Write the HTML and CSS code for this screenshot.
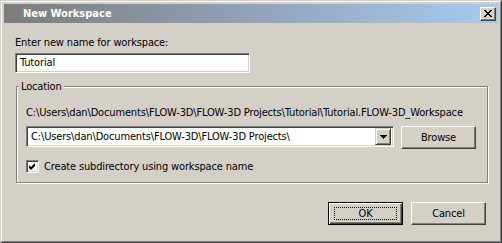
FILE: index.html
```html
<!DOCTYPE html>
<html lang="en">

<head>
  <meta charset="UTF-8">
  <meta name="viewport" content="width=device-width, initial-scale=1.0">
  <title>New Workspace</title>
  <link rel="stylesheet" href="styles.css">
</head>

<body>
  <div class="window">
    <div class="frame">
      <div class="titlebar">
        <span class="title">New Workspace</span>
        <div class="close">
          <svg width="8" height="7" viewBox="0 0 8 7">
            <path d="M0 0h2v1h-2zM6 0h2v1h-2zM1 1h2v1h-2zM5 1h2v1h-2zM2 2h4v1h-4zM3 3h2v1h-2zM2 4h4v1h-4zM1 5h2v1h-2zM5 5h2v1h-2zM0 6h2v1h-2zM6 6h2v1h-2z" fill="#000"/>
          </svg>
        </div>
      </div>

      <div class="content">
        <div class="prompt">Enter new name for workspace:</div>
        <div class="textbox">Tutorial</div>

        <fieldset class="group">
          <legend>Location</legend>
          <div class="path">C:\Users\dan\Documents\FLOW-3D\FLOW-3D Projects\Tutorial\Tutorial.FLOW-3D_Workspace</div>
          <div class="row">
            <div class="combo">
              <span class="combo-text">C:\Users\dan\Documents\FLOW-3D\FLOW-3D Projects\</span>
              <span class="drop">
                <svg width="7" height="4" viewBox="0 0 7 4"><path d="M0 0h7v1h-7zM1 1h5v1h-5zM2 2h3v1h-3zM3 3h1v1h-1z" fill="#000"/></svg>
              </span>
            </div>
            <div class="btn browse">Browse</div>
          </div>
          <div class="check">
            <span class="box">
              <svg width="7" height="7" viewBox="0 0 7 7"><path d="M6 0v3l-4 4-2-2v-3l2 2z" fill="#000"/></svg>
            </span>
            <span>Create subdirectory using workspace name</span>
          </div>
        </fieldset>

        <div class="actions">
          <div class="btn default"><span class="focus">OK</span></div>
          <div class="btn">Cancel</div>
        </div>
      </div>
    </div>
  </div>
</body>

</html>
```

FILE: styles.css
```css
body {
  margin: 0;
  padding: 0;
  background-color: #d4d0c8;
  font-family: 'DejaVu Sans Condensed', 'Liberation Sans', sans-serif;
  font-size: 11px;
  letter-spacing: -0.15px;
  color: #000;
}

.window {
  width: 502px;
  height: 243px;
  box-sizing: border-box;
  border: 1px solid;
  border-color: #d4d0c8 #404040 #404040 #d4d0c8;
}

.frame {
  height: 100%;
  box-sizing: border-box;
  border: 1px solid;
  border-color: #fff #808080 #808080 #fff;
  padding: 2px;
}

.titlebar {
  height: 19px;
  display: flex;
  align-items: center;
  justify-content: space-between;
  padding: 0 2px 0 19px;
  background: linear-gradient(90deg, #7c7c7c 0%, #8f9fb4 45%, #a8caef 100%);
}

.title {
  color: #fff;
  font-weight: bold;
  font-size: 11px;
  letter-spacing: 0;
}

.close {
  width: 16px;
  height: 14px;
  box-sizing: border-box;
  background-color: #d4d0c8;
  border: 1px solid;
  border-color: #fff #404040 #404040 #fff;
  box-shadow: inset -1px -1px #808080;
  display: flex;
  justify-content: center;
  align-items: center;
}

.close svg {
  display: block;
  margin-left: -1px;
}

.content {
  padding: 13px 12px 0 11px;
}

.prompt {
  line-height: 13px;
}

.textbox {
  margin-top: 4px;
  width: 235px;
  height: 20px;
  box-sizing: border-box;
  background-color: #fff;
  border: 1px solid;
  border-color: #808080 #fff #fff #808080;
  box-shadow: inset 1px 1px #404040, inset -1px -1px #d4d0c8;
  padding: 0 4px;
  line-height: 18px;
}

.group {
  margin: 7px 0 0 1px;
  width: 470px;
  box-sizing: border-box;
  border: 1px solid #808080;
  box-shadow: 1px 1px #fff, inset 1px 1px #fff;
  padding: 13px 11px 9px 9px;
}

.group legend {
  padding: 0 2px;
  margin-left: -7px;
  background-color: #d4d0c8;
  line-height: 13px;
}

.path {
  line-height: 13px;
  white-space: nowrap;
}

.row {
  display: flex;
  gap: 7px;
  margin-top: 7px;
  align-items: flex-start;
}

.combo {
  width: 368px;
  height: 21px;
  box-sizing: border-box;
  display: flex;
  align-items: center;
  justify-content: space-between;
  background-color: #fff;
  border: 1px solid;
  border-color: #808080 #fff #fff #808080;
  box-shadow: inset 1px 1px #404040, inset -1px -1px #d4d0c8;
  padding: 2px;
}

.combo-text {
  padding-left: 2px;
  white-space: nowrap;
}

.drop {
  width: 16px;
  height: 17px;
  box-sizing: border-box;
  background-color: #d4d0c8;
  border: 1px solid;
  border-color: #d4d0c8 #404040 #404040 #d4d0c8;
  box-shadow: inset 1px 1px #fff, inset -1px -1px #808080;
  display: flex;
  justify-content: center;
  align-items: center;
}

.btn {
  width: 75px;
  height: 23px;
  box-sizing: border-box;
  background-color: #d4d0c8;
  border: 1px solid;
  border-color: #fff #404040 #404040 #fff;
  box-shadow: inset -1px -1px #808080;
  display: flex;
  justify-content: center;
  align-items: center;
}

.check {
  display: flex;
  align-items: center;
  gap: 5px;
  margin-top: 11px;
  line-height: 13px;
}

.box {
  width: 13px;
  height: 13px;
  box-sizing: border-box;
  background-color: #fff;
  border: 1px solid;
  border-color: #808080 #fff #fff #808080;
  box-shadow: inset 1px 1px #404040, inset -1px -1px #d4d0c8;
  display: flex;
  justify-content: center;
  align-items: center;
}

.actions {
  display: flex;
  justify-content: flex-end;
  gap: 8px;
  margin-top: 19px;
}

.btn.default {
  border: 1px solid #000;
  box-shadow: inset 1px 1px #fff, inset -1px -1px #404040, inset -2px -2px #808080;
}

.focus {
  width: 63px;
  height: 13px;
  box-sizing: border-box;
  border: 1px dotted #000;
  text-align: center;
  line-height: 11px;
}
```
